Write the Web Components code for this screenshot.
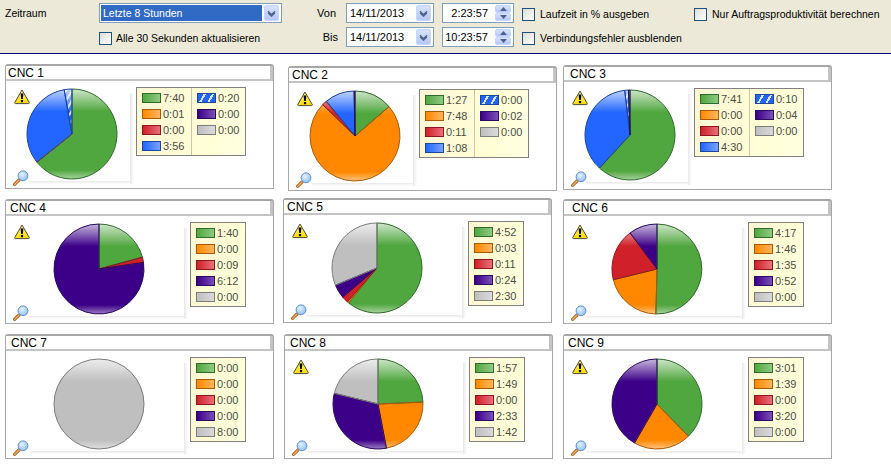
<!DOCTYPE html>
<html>
<head>
<meta charset="utf-8">
<title>CNC Auswertung</title>
<style>
  html, body { margin: 0; padding: 0; background: #fff; }
  body { font: 10.5px "Liberation Sans", Arial, sans-serif; color: #000; width: 891px; height: 467px; overflow: hidden; }
  .date { width: 88px; font-size: 11px; }
  .time { font-size: 11px; }
</style>
</head>
<body>
<cnc-toolbar>
  <span style="grid-area:1/1">Zeitraum</span>
  <xp-combo style="grid-area:1/2" selected>Letzte 8 Stunden</xp-combo>
  <xp-check style="grid-area:2/2;--gap:4px">Alle 30 Sekunden aktualisieren</xp-check>
  <span style="grid-area:1/3;justify-self:end;margin-right:10px;font-size:11px">Von</span>
  <span style="grid-area:2/3;justify-self:end;margin-right:8px;font-size:11px">Bis</span>
  <xp-combo class="date" style="grid-area:1/4">14/11/2013</xp-combo>
  <xp-combo class="date" style="grid-area:2/4">14/11/2013</xp-combo>
  <xp-spin class="time" style="grid-area:1/5">2:23:57</xp-spin>
  <xp-spin class="time" style="grid-area:2/5">10:23:57</xp-spin>
  <xp-check style="grid-area:1/6">Laufzeit in % ausgeben</xp-check>
  <xp-check style="grid-area:2/6">Verbindungsfehler ausblenden</xp-check>
  <xp-check style="grid-area:1/7">Nur Auftragsproduktivität berechnen</xp-check>
</cnc-toolbar>
<cnc-board>
  <cnc-card warn cols="2" values="7:40,0:01,0:00,3:56,0:20,0:00,0:00" style="--pad:2px">CNC 1</cnc-card>
  <cnc-card warn cols="2" values="1:27,7:48,0:11,1:08,0:00,0:02,0:00" style="margin:2px 0 0 5px;--pad:3px">CNC 2</cnc-card>
  <cnc-card warn cols="2" values="7:41,0:00,0:00,4:30,0:10,0:04,0:00" style="margin-top:1px;--pad:6px">CNC 3</cnc-card>
  <cnc-card warn values="1:40,0:00,0:09,,,6:12,0:00" style="margin-top:1px;--pad:4px">CNC 4</cnc-card>
  <cnc-card warn values="4:52,0:03,0:11,,,0:24,2:30" style="--pad:3px">CNC 5</cnc-card>
  <cnc-card warn values="4:17,1:46,1:35,,,0:52,0:00" style="margin-top:1px;--pad:8px">CNC 6</cnc-card>
  <cnc-card values="0:00,0:00,0:00,,,0:00,8:00" style="--pad:5px">CNC 7</cnc-card>
  <cnc-card warn values="1:57,1:49,0:00,,,2:33,1:42" style="margin-left:1px;--pad:5px">CNC 8</cnc-card>
  <cnc-card warn values="3:01,1:39,0:00,,,3:20,0:00" style="--pad:4px">CNC 9</cnc-card>
</cnc-board>

<script>
// Slice order of the machine states, clockwise from 12 o'clock
const STATES = [
  { fill: '#50a63f', line: '#2f6b2a', light: '#8fca84' },
  { fill: '#ff8800', line: '#a85a08', light: '#ffb55e' },
  { fill: '#d0202a', line: '#8c1520', light: '#e8707a' },
  { fill: '#2266ff', line: '#1c459c', light: '#78a2ff' },
  { fill: '#2266ff', line: '#1c459c', light: '#78a2ff', hatched: true },
  { fill: '#3c0088', line: '#2a0a60', light: '#7a50b8' },
  { fill: '#bfbfbf', line: '#7c7c7c', light: '#dadada' }
];

const toMinutes = (text) => {
  const [h, m] = text.split(':').map(Number);
  return h * 60 + m;
};

const shadowOf = (el, html) => {
  const root = el.attachShadow({ mode: 'open' });
  root.innerHTML = html;
  return root;
};

const CHEVRON = `<svg width="9" height="7" viewBox="0 0 9 7"><path d="M1 1.2 4.5 4.6 8 1.2M1 2.8 4.5 6.2 8 2.8" fill="none" stroke="#4d6185" stroke-width="1.3"/></svg>`;

class CncToolbar extends HTMLElement {
  constructor() {
    super();
    shadowOf(this, `
      <style>
        :host {
          display: grid;
          box-sizing: border-box;
          height: 54px;
          padding: 3px 0 0 5px;
          background: #ece9d8;
          border-bottom: 1px solid #000080;
          grid-template-columns: 94px 183px 64px 96px 80px 172px 180px;
          grid-template-rows: 20px 20px;
          row-gap: 4px;
          align-items: center;
        }
      </style>
      <slot></slot>`);
  }
}

class XpCombo extends HTMLElement {
  constructor() {
    super();
    const wide = this.hasAttribute('selected');
    shadowOf(this, `
      <style>
        :host {
          display: flex;
          box-sizing: border-box;
          height: 20px;
          align-items: center;
          justify-content: space-between;
          background: #fff;
          border: 1px solid #7f9db9;
          padding: 1px;
          white-space: nowrap;
        }
        .txt { flex: 1; height: 100%; display: flex; align-items: center; padding-left: 2px; margin-right: 2px; }
        .sel { background: #316ac5; color: #fff; }
        .btn {
          width: 15px; height: 16px; flex: none; margin-right: 1px;
          display: flex; align-items: center; justify-content: center;
          background: linear-gradient(#d5e1fc, #b4c8f6);
          border: 1px solid #c6d5f8; border-radius: 2px; box-sizing: border-box;
        }
      </style>
      <span class="txt ${wide ? 'sel' : ''}"><slot></slot></span>
      <span class="btn">${CHEVRON}</span>`);
  }
}

class XpSpin extends HTMLElement {
  constructor() {
    super();
    shadowOf(this, `
      <style>
        :host {
          display: flex;
          box-sizing: border-box;
          width: 72px;
          height: 20px;
          align-items: center;
          background: #fff;
          border: 1px solid #7f9db9;
          padding: 1px;
          white-space: nowrap;
        }
        .txt { width: 44px; text-align: right; flex: none; }
        .btns { margin-left: auto; margin-right: 1px; display: flex; flex-direction: column; }
        .btn {
          width: 16px; height: 8px; display: flex; align-items: center; justify-content: center;
          background: linear-gradient(#d5e1fc, #b4c8f6); border: 1px solid #c6d5f8; border-radius: 2px; box-sizing: border-box;
        }
      </style>
      <span class="txt"><slot></slot></span>
      <span class="btns">
        <span class="btn"><svg width="7" height="4" viewBox="0 0 7 4"><path d="M0 4 3.5 0 7 4z" fill="#4d6185"/></svg></span>
        <span class="btn"><svg width="7" height="4" viewBox="0 0 7 4"><path d="M0 0 3.5 4 7 0z" fill="#4d6185"/></svg></span>
      </span>`);
  }
}

class XpCheck extends HTMLElement {
  constructor() {
    super();
    shadowOf(this, `
      <style>
        :host { display: flex; align-items: center; gap: var(--gap, 5px); white-space: nowrap; margin-top: 2px; }
        .box {
          width: 13px; height: 13px; box-sizing: border-box; flex: none;
          border: 1px solid #1c5180;
          background: linear-gradient(135deg, #dcdcd7, #fff);
        }
      </style>
      <span class="box"></span><slot></slot>`);
  }
}

class CncBoard extends HTMLElement {
  constructor() {
    super();
    shadowOf(this, `
      <style>
        :host {
          display: grid;
          padding: 10px 0 0 5px;
          grid-template-columns: 278px 280px 269px;
          grid-template-rows: 134px 136px 125px;
          align-items: start;
        }
      </style>
      <slot></slot>`);
  }
}

class IconWarning extends HTMLElement {
  constructor() {
    super();
    shadowOf(this, `
      <style>:host { display: block; width: 16px; height: 16px; } svg { display: block; }</style>
      <svg width="16" height="16" viewBox="0 0 16 16">
        <defs><linearGradient id="w" x1="0" y1="0" x2="0" y2="1"><stop offset="0" stop-color="#fff27a"/><stop offset="1" stop-color="#ffdc00"/></linearGradient></defs>
        <path d="M8 1 15.2 13.4q.4 1.2-.8 1.2H1.6q-1.2 0-.8-1.2z" fill="url(#w)" stroke="#4c4a3a" stroke-width="1" stroke-linejoin="round"/>
        <path d="M6.6 4.4h2.8L8.8 10H7.2z" fill="#000"/><rect x="6.9" y="11" width="2.2" height="2.2" fill="#000"/>
      </svg>`);
  }
}

class IconZoom extends HTMLElement {
  constructor() {
    super();
    shadowOf(this, `
      <style>:host { display: block; width: 16px; height: 16px; } svg { display: block; }</style>
      <svg width="16" height="16" viewBox="0 0 16 16">
        <defs><radialGradient id="z" cx=".4" cy=".35" r=".8"><stop offset="0" stop-color="#e6f3ff"/><stop offset="1" stop-color="#7fb4f2"/></radialGradient></defs>
        <path d="M1.6 14.4 6 10" stroke="#a8682a" stroke-width="3.2" stroke-linecap="round"/>
        <path d="M1.6 14.4 6 10" stroke="#f0a860" stroke-width="1.4" stroke-linecap="round"/>
        <circle cx="10" cy="5.8" r="4.9" fill="url(#z)" stroke="#5f90d0"/>
      </svg>`);
  }
}

class CncPie extends HTMLElement {
  connectedCallback() {
    const values = (this.getAttribute('values') || '').split(',').map(v => (v ? toMinutes(v) : 0));
    const total = values.reduce((sum, v) => sum + v, 0) || 1;
    const cx = 46, cy = 46, r = 45;
    const point = (a) => [cx + r * Math.sin(a), cy - r * Math.cos(a)].map(n => n.toFixed(2)).join(' ');

    let angle = 0;
    let fills = '';
    let lines = '';
    values.forEach((value, i) => {
      if (!value) return;
      const s = STATES[i];
      const paint = s.hatched ? 'url(#hatch)' : s.fill;
      if (value === total) {
        fills += `<circle cx="${cx}" cy="${cy}" r="${r}" fill="${paint}"/>`;
        lines += `<circle cx="${cx}" cy="${cy}" r="${r}" fill="none" stroke="${s.line}"/>`;
        return;
      }
      const end = angle + (value / total) * Math.PI * 2;
      const large = end - angle > Math.PI ? 1 : 0;
      const d = `M${cx} ${cy}L${point(angle)}A${r} ${r} 0 ${large} 1 ${point(end)}Z`;
      fills += `<path d="${d}" fill="${paint}"/>`;
      lines += `<path d="${d}" fill="none" stroke="${s.line}" stroke-linejoin="round"/>`;
      angle = end;
    });

    shadowOf(this, `
      <style>:host { display: block; width: 92px; height: 92px; } svg { display: block; }</style>
      <svg width="92" height="92" viewBox="0 0 92 92">
        <defs>
          <linearGradient id="gloss" x1="0" y1="0" x2="0" y2="1">
            <stop offset="0" stop-color="#fff" stop-opacity=".72"/>
            <stop offset=".25" stop-color="#fff" stop-opacity="0"/>
            <stop offset=".9" stop-color="#fff" stop-opacity="0"/>
            <stop offset="1" stop-color="#fff" stop-opacity=".5"/>
          </linearGradient>
          <pattern id="hatch" width="5" height="5" patternUnits="userSpaceOnUse" patternTransform="rotate(30)">
            <rect width="5" height="5" fill="#2266ff"/><rect width="2" height="5" fill="#cfdcff"/>
          </pattern>
        </defs>
        ${fills}
        <circle cx="${cx}" cy="${cy}" r="${r}" fill="url(#gloss)"/>
        ${lines}
      </svg>`);
  }
}

class CncLegend extends HTMLElement {
  connectedCallback() {
    const values = (this.getAttribute('values') || '').split(',');
    const item = (i) => {
      const s = STATES[i];
      const bg = s.hatched
        ? `repeating-linear-gradient(120deg, ${s.fill} 0 5px, #dbe5ff 5px 7px)`
        : `linear-gradient(90deg, ${s.fill}, ${s.light})`;
      return `<div class="row"><i style="background:${bg};border-color:${s.line}"></i>${values[i]}</div>`;
    };
    const index = values.map((v, i) => (v ? i : -1)).filter(i => i >= 0);
    const two = this.getAttribute('cols') === '2';
    const columns = two ? [index.slice(0, 4), index.slice(4)] : [index];

    shadowOf(this, `
      <style>
        :host {
          display: flex;
          align-self: flex-start;
          box-sizing: border-box;
          height: ${two ? 69 : 85}px;
          background: linear-gradient(100deg, #fff6d4, #ffffd6 70%, #ffffe4);
          border: 1px solid #808080;
          font: 11px "Liberation Sans", Arial, sans-serif;
          color: #4c4c44;
        }
        .col { width: 54px; box-sizing: border-box; padding: 2px 0 0 5px; }
        .col + .col { border-left: 1px solid #c8c8b0; }
        .row { height: 16px; display: flex; align-items: center; gap: 2px; white-space: nowrap; }
        i { display: block; width: 19px; height: 10px; margin-bottom: 1px; box-sizing: border-box; border: 1px solid; flex: none; }
      </style>
      ${columns.map(c => `<div class="col">${c.map(item).join('')}</div>`).join('')}`);
  }
}

class CncCard extends HTMLElement {
  constructor() {
    super();
    const two = this.getAttribute('cols') === '2';
    const cols = two ? '2' : '1';
    const values = this.getAttribute('values');
    shadowOf(this, `
      <style>
        :host {
          display: block;
          box-sizing: border-box;
          width: 269px;
          height: 125px;
          background: #fff;
          border: 1px solid #a6a6a6;
          border-top-width: 2px;
          border-radius: 3px 3px 0 0;
        }
        .title {
          box-sizing: border-box;
          height: 15px;
          padding-left: var(--pad, 2px);
          font-size: 12px;
          line-height: 14px;
          background: #fff;
          border-right: 3px solid #c4c4c4;
          border-bottom: 2px solid #c4c4c4;
          color: #000;
        }
        .body { display: flex; gap: 6px; padding: 4px 0 0 7px; }
        .chart {
          position: relative;
          box-sizing: border-box;
          flex: none;
          width: ${two ? 117 : 171}px;
          height: 96px;
          display: flex;
          justify-content: center;
          align-items: center;
        }
        cnc-pie { margin-top: 2px; }
        .chart::before {
          content: ''; position: absolute; left: 100%; top: 8px; bottom: -3px; width: 4px;
          background: linear-gradient(90deg, #e8e8e8, #fff);
        }
        .chart::after {
          content: ''; position: absolute; left: 16px; right: 0; top: 96px; height: 3px;
          background: linear-gradient(#e8e8e8, #fff);
        }
        icon-warning { position: absolute; left: 1px; top: 4px; }
        icon-zoom { position: absolute; left: 0; top: 85px; }
        cnc-legend { margin-top: 2px; }
      </style>
      <div class="title"><slot></slot></div>
      <div class="body">
        <div class="chart">
          <cnc-pie values="${values}"></cnc-pie>
          ${this.hasAttribute('warn') ? '<icon-warning></icon-warning>' : ''}
          <icon-zoom></icon-zoom>
        </div>
        <cnc-legend cols="${cols}" values="${values}"></cnc-legend>
      </div>`);
  }
}

customElements.define('cnc-toolbar', CncToolbar);
customElements.define('xp-combo', XpCombo);
customElements.define('xp-spin', XpSpin);
customElements.define('xp-check', XpCheck);
customElements.define('cnc-board', CncBoard);
customElements.define('icon-warning', IconWarning);
customElements.define('icon-zoom', IconZoom);
customElements.define('cnc-pie', CncPie);
customElements.define('cnc-legend', CncLegend);
customElements.define('cnc-card', CncCard);
</script>
</body>
</html>
